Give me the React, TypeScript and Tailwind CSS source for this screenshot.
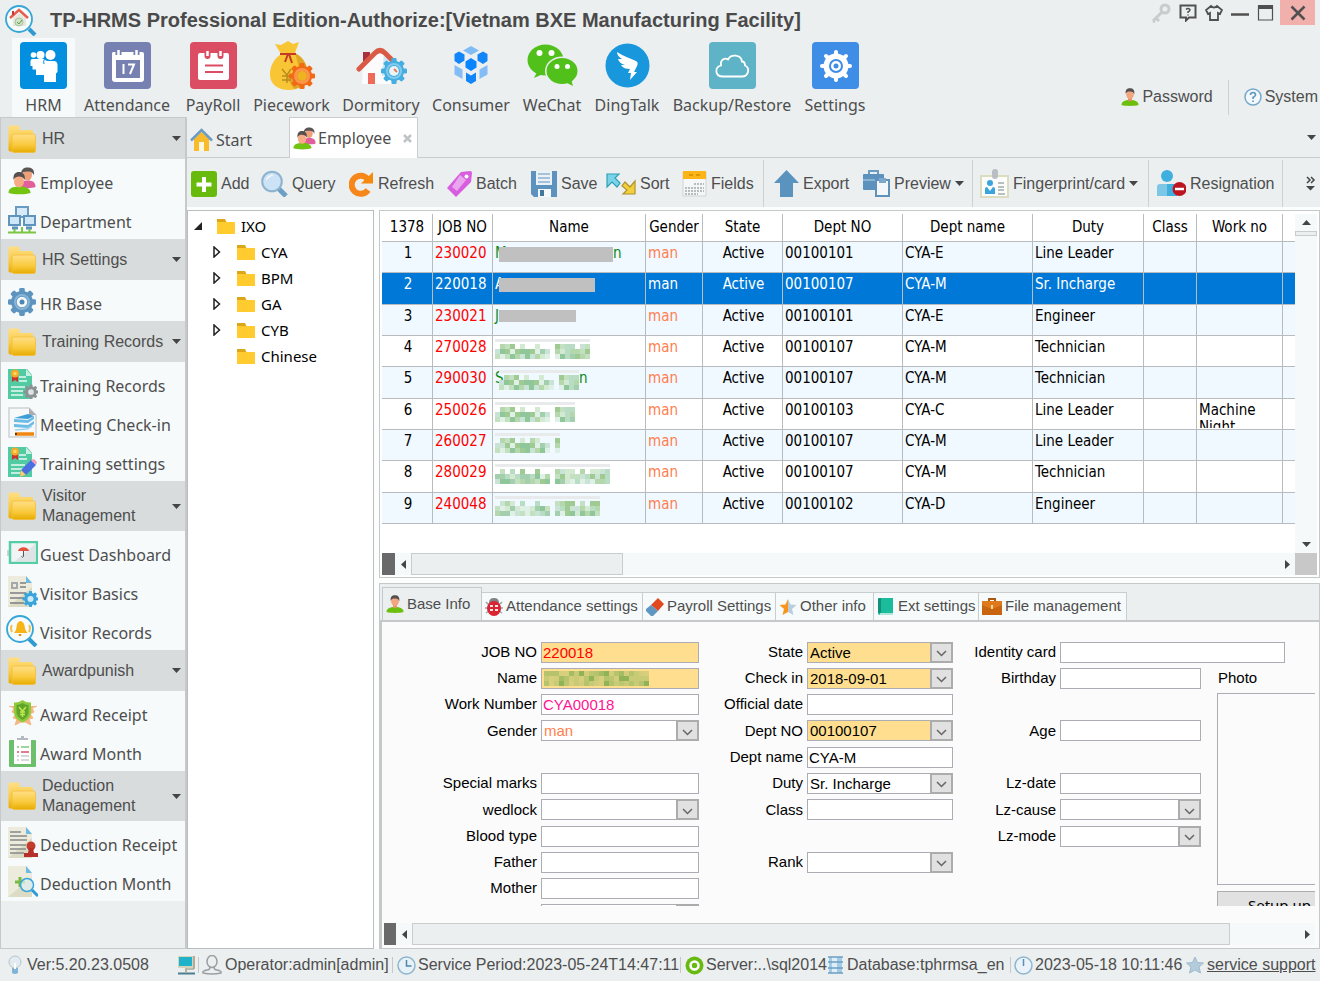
import React from 'react';

interface IconProps {
  w?: number;
  h?: number;
  box?: string;
  children: React.ReactNode;
}

const Svg: React.FC<IconProps> = ({ w = 28, h = 28, box = '0 0 28 28', children }) => (
  <svg width={w} height={h} viewBox={box} className="shrink-0" fill="none" aria-hidden="true">
    {children}
  </svg>
);

interface GearProps {
  cx: number;
  cy: number;
  r: number;
  fill: string;
  hole: string;
}

const Gear: React.FC<GearProps> = ({ cx, cy, r, fill, hole }) => (
  <g fill={fill}>
    {[0, 45, 90, 135, 180, 225, 270, 315].map((a) => (
      <rect key={a} x={cx - r * 0.2} y={cy - r} width={r * 0.4} height={r * 0.5} rx={r * 0.1} transform={`rotate(${a} ${cx} ${cy})`} />
    ))}
    <circle cx={cx} cy={cy} r={r * 0.78} />
    <circle cx={cx} cy={cy} r={r * 0.38} fill={hole} />
  </g>
);

/* ---------- people ---------- */

const PersonIcon = ({ size = 18 }: { size?: number }) => (
  <Svg w={size} h={size} box="0 0 18 18">
    <path d="M0.500 17c0-3.500 3-5 8.500-5s8.500 1.500 8.500 5c-4 1.200-13 1.200-17 0z" fill="#6cbf0c" />
    <path d="M7 9h4v3.500q-2 1.500-4 0z" fill="#e8906a" />
    <ellipse cx="9" cy="6.500" rx="3.800" ry="4.500" fill="#f3a67e" />
    <path d="M4.800 6C4 2 6 0.300 9 0.300S14 2 13.200 6.500C12.500 4 11 3.500 9 3.600 7 3.500 5.500 4 4.800 6z" fill="#55504e" />
  </Svg>
);

const PeopleIcon = ({ size = 28 }: { size?: number }) => (
  <Svg w={size} h={size}>
    <path d="M12 19c0-4 3-5.500 8-5.500s7.500 2 7.500 6.500c-4 1.500-11 1.500-15.500 0z" fill="#e0609c" />
    <ellipse cx="19.500" cy="8" rx="4.500" ry="5.500" fill="#ef9f7a" />
    <path d="M13 8C13 2 16 0.500 19.500 0.500S27 2 26 8.500C25 5 22 4.500 19 4.500S14 5 13 8z" fill="#5b5554" />
    <path d="M0.500 26c0-4.500 3.500-6.500 11-6.500S22.500 22 22.500 26c-5 1.800-17 1.800-22 0z" fill="#72c410" />
    <ellipse cx="11" cy="14.500" rx="5" ry="6" fill="#f6ab84" />
    <path d="M5.500 13C5 7 7.500 5 11 5s6.500 2 5.800 8C15.500 10.500 13.500 9.500 11 9.500S7 10 5.500 13z" fill="#57504f" />
  </Svg>
);

/* ---------- sidebar icons ---------- */

const FolderIcon = () => (
  <Svg w={28} h={28}>
    <defs>
      <linearGradient id="folder" x1="0" y1="0" x2="0" y2="1">
        <stop offset="0" stopColor="#ffdf86" />
        <stop offset="0.600" stopColor="#f9c93c" />
        <stop offset="1" stopColor="#e7ac00" />
      </linearGradient>
    </defs>
    <path d="M0.500 2q0-1.500 1.500-1.500h8q1.500 0 1.500 1.500v3h12q1.500 0 1.500 1.500v20h-23q-1.500 0-1.500-2z" fill="url(#folder)" />
    <rect x="4" y="9" width="23.500" height="18.500" rx="2" fill="url(#folder)" stroke="#f3bd3c" strokeWidth="0.800" />
  </Svg>
);

const NetworkIcon = () => (
  <Svg>
    <path d="M8 1h12v10H8z" fill="#d6eaf8" stroke="#6a9cc3" strokeWidth="2" />
    <path d="M1 10h11v9H1zM16 10h11v9H16z" fill="#cfe6f7" stroke="#5f94bd" strokeWidth="2" />
    <path d="M4 22h6M18 22h6" stroke="#5f94bd" strokeWidth="3" />
    <path d="M0 26.500h28M6.500 23v4M14 21v5M21.500 23v4" stroke="#7cc644" strokeWidth="2" />
  </Svg>
);

const GearIcon = () => (
  <Svg>
    <Gear cx={14} cy={14} r={14} fill="#5d94bf" hole="#f4f9fa" />
    <circle cx="14" cy="14" r="7" stroke="#8ab5d5" strokeWidth="2" />
    <circle cx="14" cy="14" r="2.500" fill="#4d86b3" />
  </Svg>
);

const CertificateIcon = ({ pencil = false }: { pencil?: boolean }) => (
  <Svg w={31} h={31} box="0 0 31 31">
    <path d="M1 1h19l5 6v24H1z" fill="#52cba3" />
    <path d="M19 1l6 7h-6z" fill="#c9f0e2" />
    <path d="M12 9h7M12 13h8M4 19h14M4 23h12M4 27h12" stroke="#e6faf3" strokeWidth="1.500" />
    <path d="M5 7h6v7l-3-2-3 2z" fill="#c8352f" />
    <circle cx="8" cy="5.500" r="4" fill="#f6ab28" />
    <circle cx="8" cy="5.500" r="1.800" fill="#ffd663" />
    {pencil ? (
      <g>
        <path d="M14 24L24 14l5 5-10 10-6 1z" fill="#4a6fe0" />
        <path d="M24 14l3-1 3 3-1 3z" fill="#f49ab5" />
        <path d="M14 24l5 5-6 1.500z" fill="#f6d35e" />
      </g>
    ) : (
      <Gear cx={24} cy={24} r={7.5} fill="#8c9394" hole="#dfe4e3" />
    )}
  </Svg>
);

const MeetingIcon = () => (
  <Svg w={29} h={31} box="0 0 29 31">
    <path d="M1 1h20l7 7v22H1z" fill="#f7f8f9" stroke="#cfd2d4" strokeWidth="1.500" />
    <path d="M21 1l7 7h-7z" fill="#a9adb0" />
    <path d="M6 11l14-4 6 2-6 3z" fill="#3e9fd6" />
    <path d="M6 12l14 1 6-4v3l-6 4-14-1zM6 17l14 1 6-4v3l-6 4-14-1z" fill="#6bbce6" />
    <path d="M7 23l12-1 5-3" stroke="#9dd2ee" strokeWidth="1.500" />
    <path d="M7 27h19" stroke="#f0870f" strokeWidth="3.500" />
    <path d="M7 27h2" stroke="#5b3a18" strokeWidth="2" />
  </Svg>
);

const DashboardIcon = () => (
  <Svg w={31} h={23} box="0 0 31 23">
    <path d="M0 9h3v6H0z" fill="#cfd3d4" />
    <rect x="3" y="1" width="27" height="21" fill="#f1f4f5" stroke="#56cda5" strokeWidth="2.500" />
    <path d="M28 3v17H8z" fill="#dfe3e6" />
    <path d="M11 10c1-5 10-5 11 0z" fill="#e4513f" />
    <path d="M16.500 10v5.500q-1 1.500-2 0" stroke="#555" strokeWidth="1" />
  </Svg>
);

const DocIcon = ({ kind }: { kind: 'gear' | 'stamp' | 'find' }) => (
  <Svg w={31} h={31} box="0 0 31 31">
    <path d="M1 0h18l6 7v24H1z" fill="#ecebdc" />
    <path d="M1 31l24-20v20z" fill="#dcdcc4" />
    <path d="M19 0l6 7h-6z" fill="#6dbbe3" />
    {kind === 'gear' && (
      <g>
        <path d="M5 7h5v5H5z" stroke="#a4a9ab" strokeWidth="2" />
        <path d="M13 7h6M13 11h6M3 17h16M3 22h14M3 27h14" stroke="#7b8082" strokeWidth="1.500" />
        <Gear cx={23.5} cy={23} r={8} fill="#3aa5dc" hole="#cfeaf6" />
      </g>
    )}
    {kind === 'stamp' && (
      <g>
        <path d="M3 5h11M3 9h17M3 13h17M3 18h16M3 22h16M3 26h14" stroke="#85898a" strokeWidth="1.500" />
        <circle cx="24" cy="19" r="4.500" fill="#c33d2f" />
        <path d="M22 21h4l1 5h4v4H17v-4h4z" fill="#b5302a" />
      </g>
    )}
    {kind === 'find' && (
      <g>
        <path d="M13 11v10M8 16h10" stroke="#7ab942" strokeWidth="3" />
        <circle cx="20" cy="19" r="6.500" fill="#dff1f5" fillOpacity="0.700" stroke="#3aa5dc" strokeWidth="1.500" />
        <path d="M25 24l6 6" stroke="#2f9bd3" strokeWidth="3" />
      </g>
    )}
  </Svg>
);

const BellSearchIcon = () => (
  <Svg w={32} h={32} box="0 0 32 32">
    <circle cx="14" cy="14" r="13" fill="#f7fbfc" stroke="#35a6d8" strokeWidth="1.800" />
    <path d="M14.500 6c4.500 1 4 6 5 9l2 3H8l2-3c1-3 0-8 4.500-9z" fill="#f7b417" />
    <path d="M14 19v2" stroke="#d99400" strokeWidth="2.500" />
    <path d="M6 10q-2 3 0 7M23 10q2 3 0 7" stroke="#f4c24b" strokeWidth="2" />
    <path d="M23 24l7 7" stroke="#2f9bd3" strokeWidth="4" />
  </Svg>
);

const ShieldIcon = () => (
  <Svg w={29} h={26} box="0 0 29 26">
    <path d="M1 6l5 2-2 4 4 2-3 4 4 1-2 6 6-3h4l6 3-2-6 4-1-3-4 4-2-2-4 5-2" fill="#f6b681" stroke="#f6b681" />
    <path d="M14.500 0q4 3 8.500 2.500v9c0 6-4 9-8.500 11C10 20.500 6 17.500 6 11.500v-9Q10.500 3 14.500 0z" fill="#8fca3c" />
    <path d="M14.500 3q3 2 6 2v7c0 4-3 6-6 8-3-2-6-4-6-8V5q3 0 6-2z" fill="#5fa52c" />
    <path d="M11 7l3.500 4L18 7M14.500 11v6M12 12h5M12 14.500h5" stroke="#c3e64e" strokeWidth="1.500" />
  </Svg>
);

const ClipboardIcon = () => (
  <Svg w={29} h={31} box="0 0 29 31">
    <rect x="1" y="4" width="27" height="27" rx="1" fill="#6cc06c" />
    <path d="M6 4h17v24H6z" fill="#fff" />
    <path d="M9 4h11V2h-4V0h-3v2H9z" fill="#b3b9c0" />
    <path d="M9 11h2M13 11h8" stroke="#7dc77d" strokeWidth="1.500" />
    <path d="M9 16h2M13 16h8" stroke="#d8516b" strokeWidth="1.500" />
    <path d="M9 20h2M13 20h8M9 24h2M13 24h8" stroke="#c9ccce" strokeWidth="1.500" />
  </Svg>
);

/* ---------- ribbon icons ---------- */

const HrmIcon = () => (
  <Svg w={47} h={47} box="0 0 47 47">
    <rect width="47" height="47" rx="4" fill="#038fe0" />
    <g fill="#fff">
      <circle cx="30.500" cy="13" r="5" />
      <circle cx="20.500" cy="13" r="4" />
      <circle cx="13.500" cy="13" r="2.800" />
      <path d="M10.500 19q0-2 2-2h12q1 2 3 2h6q4 0 4 4v7l-1.500 1.500V40h-12v-7h-8v-5.500h-3.500V24h-2z" />
    </g>
    <path d="M24.500 17q-1.500 2-.5 5" stroke="#038fe0" />
  </Svg>
);

const CalendarIcon = () => (
  <Svg w={47} h={47} box="0 0 47 47">
    <rect width="47" height="47" rx="4" fill="#7680b1" />
    <path d="M9 10h29q2 0 2 2v25q0 3-3 3H11q-3 0-3-3V12q0-2 1-2z" fill="#fff" />
    <path d="M12 18h24v18H12z" fill="#7680b1" />
    <path d="M14.500 8v5M32.500 8v5" stroke="#7680b1" strokeWidth="6" />
    <path d="M14.500 8v5M32.500 8v5" stroke="#fff" strokeWidth="2.500" />
    <path d="M19.500 22v10M24 22.500h6l-4 9.500" stroke="#fff" strokeWidth="2" />
  </Svg>
);

const PayrollIcon = () => (
  <Svg w={47} h={47} box="0 0 47 47">
    <rect width="47" height="47" rx="4" fill="#da4d63" />
    <rect x="8" y="11" width="31" height="27" rx="2" fill="#fff" />
    <path d="M17.500 9v5M30.500 9v5" stroke="#da4d63" strokeWidth="6" strokeLinecap="round" />
    <path d="M17.500 9v5M30.500 9v5" stroke="#fff" strokeWidth="2.500" />
    <path d="M15 23.500h18M15 30h18" stroke="#da4d63" strokeWidth="2" />
  </Svg>
);

const MoneyBagIcon = () => (
  <Svg w={47} h={50} box="0 0 47 50">
    <path d="M7 4l6 1 7-4 5 3 6-2-4 11c8 4 14 13 12 22-2 11-9 15-18 15S2 46 2 34c0-9 5-16 11-20z" fill="#f8c535" />
    <path d="M27 13c8 4 14 13 12 22-2 9-7 13-13 14L18 36l14-5z" fill="#e0a628" />
    <path d="M12 14h16M20 14l-3 8M21 14l3 9" stroke="#c43a26" strokeWidth="2" />
    <path d="M14 29l5 6 4-6M19 35v8M14 36h9M14 40h9" stroke="#b98d1c" strokeWidth="1.500" />
    <Gear cx={34} cy={36} r={13} fill="#f26a14" hole="#eeb321" />
    <circle cx="34" cy="36" r="6.500" stroke="#f9964a" strokeWidth="3" />
  </Svg>
);

const DormIcon = () => (
  <Svg w={51} h={47} box="0 0 51 47">
    <path d="M7 10h7v9H7z" fill="#a93238" />
    <path d="M7 24l17-14 15 14v18H6z" fill="#fbfbfb" />
    <path d="M28 10l11 14v10H26z" fill="#cfe8f5" />
    <path d="M12 31h7v11h-7z" fill="#ef6a5a" />
    <path d="M3 27L19 11q5-5 10 0l9 9" stroke="#d95b45" strokeWidth="5" strokeLinecap="round" />
    <Gear cx={38} cy={29} r={13} fill="#45aee0" hole="#eaf3f6" />
    <circle cx="38" cy="29" r="7" stroke="#82cbec" strokeWidth="2" />
    <path d="M38 27l3 3" stroke="#e87965" strokeWidth="2" />
  </Svg>
);

const ConsumerIcon = () => (
  <Svg w={34} h={38} box="0 0 34 38">
    <path d="M17 0l8 4.500L17 9 9 4.500z" fill="#7fbcf6" />
    <path d="M0.500 8L5 5.500l5.500 3v6L5 18l-4.500-3zM33.500 8L29 5.500l-5.500 3v6L29 18l4.500-3z" fill="#1285f8" />
    <path d="M17 12l5.500 3.500v6L17 25l-5.500-3.500v-6z" fill="#0a84ff" />
    <path d="M0.500 19l8 4.500V33l-8-4.500zM33.500 19l-8 4.500V33l8-4.500z" fill="#84bdf5" />
    <path d="M12 26.500l5 3 5-3V35l-5 3-5-3z" fill="#1285f8" />
  </Svg>
);

const WeChatIcon = () => (
  <Svg w={51} h={42} box="0 0 51 42">
    <ellipse cx="18.500" cy="16" rx="18" ry="15.500" fill="#51c01a" />
    <path d="M10 28l-3 6 9-4z" fill="#51c01a" />
    <ellipse cx="35" cy="27" rx="17" ry="14.500" fill="#ebeff0" />
    <ellipse cx="35" cy="27" rx="15.500" ry="13" fill="#51c01a" />
    <path d="M38 38l8 4-2-7z" fill="#51c01a" />
    <g fill="#fff">
      <circle cx="12.500" cy="9" r="3" />
      <circle cx="24.500" cy="9" r="3" />
      <circle cx="30" cy="22.500" r="2.500" />
      <circle cx="40.500" cy="22.500" r="2.500" />
    </g>
  </Svg>
);

const DingTalkIcon = () => (
  <Svg w={45} h={45} box="0 0 45 45">
    <circle cx="22.500" cy="22.500" r="22" fill="#1897dd" />
    <path d="M12 9c6 4 13 6 19 9 2 1 2 3 1 5l-3 6h3l-7 8 1-7h-3l2-4c-4 0-7-1-9-4l4 0c-4-1-6-3-7-6l4 0c-3-2-5-4-5-7z" fill="#fff" />
  </Svg>
);

const CloudIcon = () => (
  <Svg w={47} h={47} box="0 0 47 47">
    <rect width="47" height="47" rx="4" fill="#5eb3c7" />
    <path d="M14 34.500c-8 0-9-9-2-11-1-6 4-8 7-6 3-6 13-5 14 2 3 0 3 2 3 4 5 2 4 11-3 11z" stroke="#fff" strokeWidth="1.800" />
  </Svg>
);

const SettingsIcon = () => (
  <Svg w={47} h={47} box="0 0 47 47">
    <rect width="47" height="47" rx="4" fill="#3e8de6" />
    <g stroke="#fff" strokeWidth="4" strokeLinecap="round">
      <path d="M24 10v28M10 24h28M14 14l20 20M34 14l-20 20" />
    </g>
    <circle cx="24" cy="24" r="12.500" fill="#fff" />
    <circle cx="24" cy="24" r="6" stroke="#3e8de6" strokeWidth="2" />
    <circle cx="24" cy="24" r="2.500" fill="#3e8de6" />
  </Svg>
);

/* ---------- toolbar icons ---------- */

const AddIcon = () => (
  <Svg w={26} h={26} box="0 0 26 26">
    <rect width="26" height="26" rx="3" fill="#68bb0d" />
    <path d="M13 6v15M5.500 13.500h15" stroke="#fff" strokeWidth="4" />
  </Svg>
);

const QueryIcon = () => (
  <Svg w={27} h={27} box="0 0 27 27">
    <path d="M17 18l8 8" stroke="#6e9fc6" strokeWidth="5" />
    <circle cx="11" cy="11.500" r="9.800" fill="#cbe3f4" stroke="#8eb3cf" strokeWidth="2" />
    <path d="M5 11c0-4 4-7 8-6-3 1-6 3-8 6z" fill="#f4fafd" />
  </Svg>
);

const RefreshIcon = () => (
  <Svg w={25} h={26} box="0 0 25 26">
    <path d="M18.500 8A9 9 0 1 0 19 19" stroke="#f7861b" strokeWidth="6" />
    <path d="M12 12.500h12V1z" fill="#f58a0c" />
  </Svg>
);

const TagIcon = () => (
  <Svg w={26} h={26} box="0 0 26 26">
    <path d="M15 1l9-1q2 0 2 2l-1 9-15 15L1 17z" fill="#d85ddf" />
    <path d="M14 4l6 5-9 11-5-4z" fill="#eaa5ef" />
    <circle cx="20.500" cy="5.500" r="2" fill="#fff" />
  </Svg>
);

const SaveIcon = () => (
  <Svg w={26} h={27} box="0 0 26 27">
    <path d="M0 1h26v26H3l-3-3z" fill="#5c92bd" />
    <path d="M5 1h16v14H5z" fill="#eaf2f8" />
    <path d="M7 4h12M7 8h12M7 12h12" stroke="#8fb3d0" strokeWidth="1.500" />
    <path d="M7 19h13v8H7z" fill="#f4f8fb" />
    <path d="M9 20h4v6H9z" fill="#3f779f" />
  </Svg>
);

const SortIcon = () => (
  <Svg w={30} h={22} box="0 0 30 22">
    <path d="M1 1h12l-4 4 5 5-3 4-5-5-5 5z" fill="#7ad3e6" stroke="#2f9fb8" strokeWidth="1.200" />
    <path d="M29 21H17l4-4-5-4 3-4 5 5 5-6z" fill="#f2cf3b" stroke="#b1922a" strokeWidth="1.200" />
  </Svg>
);

const FieldsIcon = () => (
  <Svg w={25} h={26} box="0 0 25 26">
    <path d="M1 1h23v24H1z" fill="#f5f6f7" stroke="#cfd3d5" />
    <path d="M1 0h23v8H1z" fill="#fdb515" />
    <path d="M7 4h4M14 4h4" stroke="#d08f00" strokeWidth="1.500" />
    <path d="M12 13h10M3 17h19M3 20h19M3 23h13" stroke="#b7bcbf" strokeWidth="2" strokeDasharray="2 1" />
  </Svg>
);

const ExportIcon = () => (
  <Svg w={25} h={28} box="0 0 25 28">
    <path d="M12.500 0L25 13h-6v14H6V13H0z" fill="#5b93bf" />
  </Svg>
);

const PreviewIcon = () => (
  <Svg w={27} h={27} box="0 0 27 27">
    <path d="M6 4V1h9v3" stroke="#6d9cc2" strokeWidth="2" />
    <rect y="4" width="21" height="16" rx="1" fill="#5c92bd" />
    <path d="M0 10h21" stroke="#9cc0dc" strokeWidth="1.500" />
    <path d="M13 10h13v16H13z" fill="#f4f7fa" stroke="#6092b9" strokeWidth="2" />
    <path d="M16 8h7v5h-7z" fill="#7ba8cb" />
  </Svg>
);

const CardIcon = () => (
  <Svg w={29} h={29} box="0 0 29 29">
    <path d="M1 7h27v21H1z" fill="#fbfcfc" stroke="#dcdcc0" strokeWidth="2" />
    <rect x="12" y="0" width="6" height="10" rx="3" fill="#b9bec2" />
    <circle cx="10" cy="14" r="3" fill="#3aa5dc" />
    <path d="M5 25v-5q0-2 2-2l3 4 3-4q2 0 2 2v5z" fill="#3aa5dc" />
    <path d="M18 14h6M18 18h6M18 21h6M18 25h7" stroke="#a4a9ab" strokeWidth="1.500" />
  </Svg>
);

const ResignIcon = () => (
  <Svg w={29} h={27} box="0 0 29 27">
    <circle cx="10" cy="6" r="6" fill="#3fafdd" />
    <path d="M0 26V17q0-3 3-3h14q3 0 3 3v9z" fill="#7cc6e6" />
    <path d="M10 14h7q3 0 3 3v9H10z" fill="#3fafdd" />
    <circle cx="22.500" cy="19" r="7" fill="#be1420" />
    <path d="M18 19h9" stroke="#fff" strokeWidth="2.500" />
  </Svg>
);

const HomeIcon = () => (
  <Svg w={23} h={24} box="0 0 23 24">
    <path d="M4 11l7.500-7L19 11v12H4z" fill="#f8bb2b" />
    <path d="M9 14h5v9H9z" fill="#fff7dd" />
    <path d="M1 12.500L11.500 2 22 12.500" stroke="#6d9cc2" strokeWidth="2.500" />
  </Svg>
);

const Arrow = ({ dir }: { dir: 'down' | 'up' | 'left' | 'right' }) => {
  const d = {
    down: 'M0 2h9L4.500 7z',
    up: 'M0 7h9L4.500 2z',
    left: 'M7 0v9L2 4.500z',
    right: 'M2 0v9l5-4.500z',
  }[dir];
  return (
    <Svg w={9} h={9} box="0 0 9 9">
      <path d={d} fill="#454545" />
    </Svg>
  );
};

/* ---------- data ---------- */

const modules = [
  { label: 'HRM', width: 'w-[63px] bg-[#f6fafb]', icon: <HrmIcon /> },
  { label: 'Attendance', width: 'w-[104px]', icon: <CalendarIcon /> },
  { label: 'PayRoll', width: 'w-[68px]', icon: <PayrollIcon /> },
  { label: 'Piecework', width: 'w-[89px]', icon: <MoneyBagIcon /> },
  { label: 'Dormitory', width: 'w-[90px]', icon: <DormIcon /> },
  { label: 'Consumer', width: 'w-[90px]', icon: <ConsumerIcon /> },
  { label: 'WeChat', width: 'w-[72px]', icon: <WeChatIcon /> },
  { label: 'DingTalk', width: 'w-[78px]', icon: <DingTalkIcon /> },
  { label: 'Backup/Restore', width: 'w-[132px]', icon: <CloudIcon /> },
  { label: 'Settings', width: 'w-[74px]', icon: <SettingsIcon /> },
];

const navGroups = [
  {
    title: 'HR',
    tall: false,
    items: [
      { label: 'Employee', icon: <PeopleIcon /> },
      { label: 'Department', icon: <NetworkIcon /> },
    ],
  },
  { title: 'HR Settings', tall: false, items: [{ label: 'HR Base', icon: <GearIcon /> }] },
  {
    title: 'Training Records',
    tall: false,
    items: [
      { label: 'Training Records', icon: <CertificateIcon /> },
      { label: 'Meeting Check-in', icon: <MeetingIcon /> },
      { label: 'Training settings', icon: <CertificateIcon pencil /> },
    ],
  },
  {
    title: 'Visitor Management',
    tall: true,
    items: [
      { label: 'Guest Dashboard', icon: <DashboardIcon /> },
      { label: 'Visitor Basics', icon: <DocIcon kind="gear" /> },
      { label: 'Visitor Records', icon: <BellSearchIcon /> },
    ],
  },
  {
    title: 'Awardpunish',
    tall: false,
    items: [
      { label: 'Award Receipt', icon: <ShieldIcon /> },
      { label: 'Award Month', icon: <ClipboardIcon /> },
    ],
  },
  {
    title: 'Deduction Management',
    tall: true,
    items: [
      { label: 'Deduction Receipt', icon: <DocIcon kind="stamp" /> },
      { label: 'Deduction Month', icon: <DocIcon kind="find" /> },
    ],
  },
];

interface Employee {
  jobNo: string;
  first?: string;
  last?: string;
  bar?: string;
  mosaic?: number;
  deptNo: string;
  dept: string;
  duty: string;
  workNo?: string;
}

const employees: Employee[] = [
  { jobNo: '230020', first: 'M', last: 'n', bar: 'w-[114px] h-[15px]', deptNo: '00100101', dept: 'CYA-E', duty: 'Line Leader' },
  { jobNo: '220018', first: 'A', bar: 'w-[96px] h-[14px]', deptNo: '00100107', dept: 'CYA-M', duty: 'Sr. Incharge' },
  { jobNo: '230021', first: 'J', bar: 'w-[77px] h-[12px]', deptNo: '00100101', dept: 'CYA-E', duty: 'Engineer' },
  { jobNo: '270028', mosaic: 19, deptNo: '00100107', dept: 'CYA-M', duty: 'Technician' },
  { jobNo: '290030', first: 'S', last: 'n', mosaic: 16, deptNo: '00100107', dept: 'CYA-M', duty: 'Technician' },
  { jobNo: '250026', mosaic: 16, deptNo: '00100103', dept: 'CYA-C', duty: 'Line Leader', workNo: 'Machine Night' },
  { jobNo: '260027', mosaic: 13, deptNo: '00100107', dept: 'CYA-M', duty: 'Line Leader' },
  { jobNo: '280029', mosaic: 23, deptNo: '00100107', dept: 'CYA-M', duty: 'Technician' },
  { jobNo: '240048', mosaic: 21, deptNo: '00100102', dept: 'CYA-D', duty: 'Engineer' },
];

const greens = ['#8fc79a', '#b4d8ab', '#d3e9d2', '#a3cfae', '#c3e0c0', '#9fca92', '#dff0e6', '#c9e4d6', '#b9dcc4'];
const olives = ['#b5c46c', '#d8cf7c', '#a4bd62', '#c9ca76', '#8fb356', '#d3cd7b', '#bcc66e'];

interface MosaicProps {
  cols: number;
  colors?: string[];
  band?: boolean;
}

// pixelated cover over a private name
const Mosaic: React.FC<MosaicProps> = ({ cols, colors = greens, band = true }) => {
  const top = band ? 5 : 0;
  return (
    <svg width={cols * 5} height={15 + top} className="relative shrink-0" aria-hidden="true">
      {band && <rect width={cols * 5} height="3" fill="#e8eaeb" />}
      {Array.from({ length: cols * 3 }, (_, i) => {
        const c = i % cols;
        const r = Math.floor(i / cols);
        const n = (c * c * 7 + r * 31 + c * r * 11 + cols * 3) % 97;
        if (band && (c === 11 || (r === 0 && n % 3 === 0))) return null;
        return <rect key={i} x={c * 5} y={r * 5 + top} width="5" height="5" fill={colors[n % colors.length]} />;
      })}
    </svg>
  );
};

/* ---------- sections ---------- */

const TitleBar = () => (
  <div className="flex h-[38px] items-start px-[5px]">
    <div className="flex flex-1 items-center pt-[4px]">
      <Svg w={32} h={32} box="0 0 32 32">
        <circle cx="14" cy="15" r="13" fill="#f7fbfc" stroke="#35a6d8" strokeWidth="1.800" />
        <path d="M8 14l6-5 7 5v8H8z" fill="#e9e6de" />
        <path d="M5 14l9-8 9 8" stroke="#e4604e" strokeWidth="2.500" />
        <path d="M8 7v4" stroke="#c23b34" strokeWidth="2" />
        <circle cx="14" cy="18" r="4" fill="#cfe3c8" stroke="#a8c59c" />
        <path d="M12 18l2 2 3-4" stroke="#5aa048" />
        <path d="M24 25l6 6" stroke="#2f9bd3" strokeWidth="4" />
      </Svg>
      <h1 className="ml-[13px] whitespace-nowrap text-[20px] leading-[32px] font-bold text-[#4a4a4a]">
        TP-HRMS Professional Edition-Authorize:[Vietnam BXE Manufacturing Facility]
      </h1>
    </div>
    <div className="flex h-[25px] items-center gap-[8px]">
      <button aria-label="Key">
        <Svg w={20} h={20} box="0 0 20 20">
          <circle cx="14" cy="6" r="4" stroke="#c9cccd" strokeWidth="3" />
          <path d="M11 9l-9 9M5 15l3 3M2 18l2 1" stroke="#c9cccd" strokeWidth="3" />
        </Svg>
      </button>
      <button aria-label="Help">
        <Svg w={18} h={18} box="0 0 18 18">
          <path d="M1.500 1.500h15v12H10l-3 3v-3H1.500z" stroke="#505050" strokeWidth="2" />
          <path d="M7 5.500q2-2 4 0 0 1.500-2 2.500v1M9 10.500v1" stroke="#505050" strokeWidth="1.500" />
        </Svg>
      </button>
      <button aria-label="Skin">
        <Svg w={18} h={18} box="0 0 18 18">
          <path d="M6 2L1 6l2 4 2-1v7h8V9l2 1 2-4-5-4q-3 3-6 0z" stroke="#505050" strokeWidth="1.800" />
        </Svg>
      </button>
      <button aria-label="Minimize">
        <Svg w={18} h={18} box="0 0 18 18">
          <path d="M0 10.500h18" stroke="#505050" strokeWidth="2.500" />
        </Svg>
      </button>
      <div className="flex items-center gap-[6px]">
        <button aria-label="Maximize">
          <Svg w={17} h={18} box="0 0 17 18">
            <path d="M1.500 2h14v14h-14z" stroke="#505050" strokeWidth="1.200" />
            <path d="M1 3h15" stroke="#505050" strokeWidth="4" />
          </Svg>
        </button>
        <button aria-label="Close" className="flex h-[25px] w-[35px] items-center justify-center bg-[#f1b0ac]">
          <Svg w={16} h={16} box="0 0 16 16">
            <path d="M1.500 1.500l13 13M14.500 1.500l-13 13" stroke="#505050" strokeWidth="2.500" />
          </Svg>
        </button>
      </div>
    </div>
  </div>
);

const Ribbon = () => (
  <div className="flex h-[79px] pl-3">
    <nav className="flex flex-1 font-['Noto_Sans',sans-serif]">
      {modules.map((m) => (
        <button key={m.label} className={`flex flex-col items-center pt-[2px] ${m.width}`}>
          <span className="flex h-[50px] items-center">{m.icon}</span>
          <span className="pt-[4px] text-[16px] leading-[22px] whitespace-nowrap">{m.label}</span>
        </button>
      ))}
    </nav>
    <div className="mt-[41px] flex h-[36px] items-center pr-[2px]">
      <button className="flex items-center gap-[3px] pr-[15px]">
        <PersonIcon />
        Password
      </button>
      <span className="h-[35px] w-px bg-[#cdd1d2]" />
      <button className="flex items-center gap-[3px] pl-[15px]">
        <Svg w={18} h={18} box="0 0 18 18">
          <circle cx="9" cy="9" r="8" fill="#f2f8fb" stroke="#74a9cb" strokeWidth="1.500" />
          <path d="M6.500 7q0-2.500 2.500-2.500T11.500 7Q11.500 8 9 9.500V11M9 12.500V14" stroke="#5c99c0" strokeWidth="1.600" />
        </Svg>
        System
      </button>
    </div>
  </div>
);

const Sidebar = () => (
  <aside className="w-[187px] shrink-0 border border-r-2 border-[#c5c9ca] bg-[#ebeff0]">
    {navGroups.map((g) => (
      <section key={g.title}>
        <button className={`flex w-full items-center bg-[#d8dcdc] pr-[4px] pl-[7px] text-left ${g.tall ? 'h-[50px]' : 'h-[41px]'}`}>
          <FolderIcon />
          <span className="ml-[6px] flex-1 leading-[20px]">{g.title}</span>
          <Arrow dir="down" />
        </button>
        <ul className="bg-[#f6fafb] pt-[2px] font-['Noto_Sans',sans-serif]">
          {g.items.map((item) => (
            <li key={item.label}>
              <button className="flex h-[39px] w-full items-center text-left whitespace-nowrap">
                <span className="flex w-[39px] shrink-0 items-center justify-center pl-[3px]">{item.icon}</span>
                <span className="pt-1">{item.label}</span>
              </button>
            </li>
          ))}
        </ul>
      </section>
    ))}
  </aside>
);

const TabStrip = () => (
  <div className="flex h-[41px] items-stretch border-b border-[#c9cdce] font-['Noto_Sans',sans-serif]">
    <button className="flex w-[102px] items-center gap-[3px] pt-[5px] pl-[3px]">
      <HomeIcon />
      Start
    </button>
    <button className="-mb-px flex w-[129px] items-center gap-[2px] border border-b-0 border-[#c9cdce] bg-white pl-[3px]">
      <PeopleIcon size={23} />
      Employee
      <span className="ml-auto pr-[5px]">
        <Svg w={9} h={9} box="0 0 9 9">
          <path d="M1 1l7 7M8 1L1 8" stroke="#c0c3c4" strokeWidth="2.500" />
        </Svg>
      </span>
    </button>
    <button aria-label="More tabs" className="ml-auto pr-[4px]">
      <Arrow dir="down" />
    </button>
  </div>
);

const ToolButton = ({ label, icon, width, menu = false }: { label: string; icon: React.ReactNode; width: string; menu?: boolean }) => (
  <button className={`flex h-full shrink-0 items-center gap-[4px] whitespace-nowrap ${width}`}>
    {icon}
    <span>{label}</span>
    {menu && <Arrow dir="down" />}
  </button>
);

const Separator = () => <span className="h-full w-px shrink-0 bg-[#cdd1d2]" />;

const Toolbar = () => (
  <div className="flex h-[49px] items-center pt-[2px] pl-[4px]">
    <ToolButton label="Add" icon={<AddIcon />} width="w-[70px]" />
    <ToolButton label="Query" icon={<QueryIcon />} width="w-[88px]" />
    <ToolButton label="Refresh" icon={<RefreshIcon />} width="w-[97px]" />
    <ToolButton label="Batch" icon={<TagIcon />} width="w-[85px]" />
    <ToolButton label="Save" icon={<SaveIcon />} width="w-[75px]" />
    <ToolButton label="Sort" icon={<SortIcon />} width="w-[76px]" />
    <ToolButton label="Fields" icon={<FieldsIcon />} width="w-[81px]" />
    <Separator />
    <ToolButton label="Export" icon={<ExportIcon />} width="ml-[10px] w-[89px]" />
    <ToolButton label="Preview" icon={<PreviewIcon />} width="w-[109px]" menu />
    <Separator />
    <ToolButton label="Fingerprint/card" icon={<CardIcon />} width="ml-[7px] w-[168px]" menu />
    <Separator />
    <ToolButton label="Resignation" icon={<ResignIcon />} width="ml-[8px] w-[125px]" />
    <Separator />
    <button aria-label="More tools" className="ml-auto pr-[4px]">
      <Svg w={10} h={15} box="0 0 10 15">
        <path d="M1 1l3 3-3 3M5 1l3 3-3 3" stroke="#454545" strokeWidth="1.500" />
        <path d="M0 10h9l-4.500 4.500z" fill="#454545" />
      </Svg>
    </button>
  </div>
);

const TreeFolder = () => (
  <Svg w={18} h={15} box="0 0 18 15">
    <path d="M0 0h8l1.500 3H18v4H0z" fill="#dba716" />
    <path d="M0 3h18v12H0z" fill="#ffcb2f" />
  </Svg>
);

const Tree = () => (
  <div className="w-[187px] shrink-0 border border-[#b9bdbe] bg-white pt-[2px] font-['Noto_Sans',sans-serif] text-[15px] leading-[26px] text-black">
    <div className="flex items-center pl-[6px]">
      <Svg w={8} h={8} box="0 0 8 8">
        <path d="M8 0v8H0z" fill="#222" />
      </Svg>
      <span className="mr-[6px] ml-[15px]"><TreeFolder /></span>
      IXO
    </div>
    {['CYA', 'BPM', 'GA', 'CYB', 'Chinese'].map((name) => (
      <div key={name} className="flex items-center pl-[25px]">
        <span className="w-[24px]">
          {name !== 'Chinese' && (
            <Svg w={8} h={12} box="0 0 8 12">
              <path d="M1 1v10l5.500-5z" stroke="#222" strokeWidth="1.500" />
            </Svg>
          )}
        </span>
        <TreeFolder />
        <span className="ml-[6px]">{name}</span>
      </div>
    ))}
  </div>
);

const columns = [
  { label: '1378', width: 'w-[51px]' },
  { label: 'JOB NO', width: 'w-[60px]' },
  { label: 'Name', width: 'w-[153px]' },
  { label: 'Gender', width: 'w-[57px]' },
  { label: 'State', width: 'w-[80px]' },
  { label: 'Dept NO', width: 'w-[120px]' },
  { label: 'Dept name', width: 'w-[130px]' },
  { label: 'Duty', width: 'w-[111px]' },
  { label: 'Class', width: 'w-[53px]' },
  { label: 'Work no', width: 'w-[86px]' },
  { label: '', width: '' },
];

const Cell = ({ children, className = '' }: { children?: React.ReactNode; className?: string }) => (
  <td className="border-r border-b border-[#b9bcbe] p-0 align-top last:border-r-0">
    <div className={`h-[29px] overflow-hidden pt-[3px] pl-[2px] leading-[17px] ${className}`}>{children}</div>
  </td>
);

const EmployeeTable = () => (
  <table className="h-[310px] w-full table-fixed border-separate border-spacing-0 text-[15px] text-black">
    <thead>
      <tr className="h-[28px]">
        {columns.map((c) => (
          <th key={c.label} className={`border-r border-b border-[#b9bcbe] p-0 font-normal whitespace-nowrap last:border-r-0 ${c.width}`}>
            {c.label}
          </th>
        ))}
      </tr>
    </thead>
    <tbody>
      {employees.map((e, i) => {
        const selected = i === 1;
        return (
          <tr key={e.jobNo} className={selected ? 'bg-[#0078d7] text-white' : i % 2 === 0 ? 'bg-[#f0f9ff]' : 'bg-white'}>
            <Cell className="text-center">{i + 1}</Cell>
            <Cell className={selected ? '' : 'text-[#ff0000]'}>{e.jobNo}</Cell>
            <Cell className={selected ? '' : 'text-[#0a8a1e]'}>
              <span className="flex items-start">
                {e.first && <span className="w-[4px]">{e.first}</span>}
                {e.bar && <span className={`relative mt-[2px] bg-[#c0c0c0] ${e.bar}`} />}
                {e.mosaic && <Mosaic cols={e.mosaic} />}
                {e.last}
              </span>
            </Cell>
            <Cell className={selected ? '' : 'text-[#ff7f50]'}>man</Cell>
            <Cell className="text-center">Active</Cell>
            <Cell>{e.deptNo}</Cell>
            <Cell>{e.dept}</Cell>
            <Cell>{e.duty}</Cell>
            <Cell />
            <Cell>{e.workNo}</Cell>
            <Cell />
          </tr>
        );
      })}
    </tbody>
  </table>
);

const TablePanel = () => (
  <div className="flex h-[368px] flex-col border border-[#c5c9ca] bg-white p-[2px] pt-[3px]">
    <div className="flex min-h-0 flex-1 font-['DejaVu_Sans_Condensed','Noto_Sans',sans-serif]">
      <div className="min-w-0 flex-1">
        <EmployeeTable />
      </div>
      <div className="flex w-[22px] flex-col items-center bg-[#f5f9fa] pt-[4px] pb-[4px]">
        <Arrow dir="up" />
        <span className="mt-[4px] h-[5px] w-full border border-[#c9cdce] bg-[#ebeff0]" />
        <span className="mt-auto"><Arrow dir="down" /></span>
      </div>
    </div>
    <div className="flex h-[22px] items-center bg-[#f5f9fa]">
      <span className="mr-[4px] h-full w-[13px] bg-[#696969]" />
      <Arrow dir="left" />
      <span className="ml-[3px] h-full w-[212px] border border-[#c9cdce] bg-[#ebeff0]" />
      <span className="mr-[3px] ml-auto"><Arrow dir="right" /></span>
      <span className="h-full w-[22px] bg-[#c8c8c8]" />
    </div>
  </div>
);

const detailTabs = [
  {
    label: 'Attendance settings',
    width: 'w-[161px]',
    icon: (
      <Svg w={18} h={18} box="0 0 18 18">
        <path d="M1 4l3 3M17 4l-3 3M0 10h3M15 10h3M1 15l3-2M17 15l-3-2" stroke="#96a4ae" strokeWidth="1.500" />
        <path d="M4 5q0-5 5-5t5 5z" fill="#7c8489" />
        <ellipse cx="9" cy="10.500" rx="7" ry="7.500" fill="#d92532" />
        <path d="M5 8h3M10 8h3M5 12h3M10 12h3" stroke="#fbe3e4" strokeWidth="2" />
      </Svg>
    ),
  },
  {
    label: 'Payroll Settings',
    width: 'w-[133px]',
    icon: (
      <Svg w={18} h={18} box="0 0 18 18">
        <path d="M12 0l6 6-6 7-7-6z" fill="#e2491f" />
        <path d="M5 7l7 6-5 5H5l-5-5v-2z" fill="#5f96c2" />
      </Svg>
    ),
  },
  {
    label: 'Other info',
    width: 'w-[98px]',
    icon: (
      <Svg w={18} h={18} box="0 0 18 18">
        <path d="M9 1l2.500 5.500 6 .5-4.500 4 1.500 6L9 14z" fill="#b9cddb" />
        <path d="M9 1L6.500 6.500l-6 .5L5 11l-1.500 6L9 14z" fill="#f8951d" />
      </Svg>
    ),
  },
  {
    label: 'Ext settings',
    width: 'w-[105px]',
    icon: (
      <Svg w={18} h={18} box="0 0 18 18">
        <path d="M1 1q0-1 2-1h13v17H3q-2 0-2-2z" fill="#1abc9c" />
        <path d="M1 1q0-1 2-1h1v15H1z" fill="#12927a" />
        <path d="M3 16h13" stroke="#dff4ef" strokeWidth="1.500" />
      </Svg>
    ),
  },
  {
    label: 'File management',
    width: 'w-[148px]',
    icon: (
      <Svg w={20} h={18} box="0 0 20 18">
        <path d="M7 4V1h6v3" stroke="#a85a10" strokeWidth="2" />
        <path d="M0 3h20v14H0z" fill="#c9650f" />
        <path d="M0 3h20v4l-10 4L0 7z" fill="#de7a1b" />
        <path d="M10 7v4" stroke="#f9d49c" strokeWidth="2" />
      </Svg>
    ),
  },
];

interface FieldProps {
  label: string;
  row: string;
  value?: string;
  select?: boolean;
  tone?: string;
  width?: string;
}

const Field: React.FC<FieldProps> = ({ label, row, value = '', select = false, tone = 'bg-white text-black', width = 'w-full' }) => {
  const id = React.useId();
  return (
    <>
      <label htmlFor={id} className={`col-start-1 self-center text-right whitespace-nowrap ${row}`}>
        {label}
      </label>
      <div className={`relative col-start-2 h-[21px] self-center ${row} ${width}`}>
        {select ? (
          <>
            <select id={id} defaultValue={value} className={`h-[21px] w-full appearance-none border border-[#acacb4] pl-[2px] leading-[19px] ${tone}`}>
              <option value={value}>{value}</option>
            </select>
            <span className="pointer-events-none absolute top-0 right-0 flex h-[21px] w-[23px] items-center justify-center border-2 border-[#acacac] bg-[#e1e1e1] pt-[3px]">
              <Svg w={11} h={7} box="0 0 11 7">
                <path d="M1 1l4.500 4.500L10 1" stroke="#666" strokeWidth="1.500" />
              </Svg>
            </span>
          </>
        ) : (
          <input id={id} type="text" defaultValue={value} className={`block h-[21px] w-full border border-[#acacb4] px-[1px] leading-[19px] ${tone}`} />
        )}
      </div>
    </>
  );
};

const amber = 'bg-[#ffdf8f] text-black';

const DetailForm = () => (
  <form className="flex min-h-0 flex-1 overflow-hidden pt-[17px] text-[15px] text-black">
    <div className="grid h-[289px] shrink-0 grid-cols-[155px_158px] grid-rows-11 gap-x-[4px]">
      <Field label="JOB NO" row="row-start-1" value="220018" tone="bg-[#ffdf8f] text-[#ff0000]" />
      <Field label="Name" row="row-start-2" tone={amber} />
      <span className="z-10 col-start-2 row-start-2 self-center pl-[3px]">
        <Mosaic cols={21} colors={olives} band={false} />
      </span>
      <Field label="Work Number" row="row-start-3" value="CYA00018" tone="bg-white text-[#ff1493]" />
      <Field label="Gender" row="row-start-4" value="man" select tone="bg-white text-[#ff7f50]" />
      <Field label="Special marks" row="row-start-6" />
      <Field label="wedlock" row="row-start-7" select />
      <Field label="Blood type" row="row-start-8" />
      <Field label="Father" row="row-start-9" />
      <Field label="Mother" row="row-start-10" />
      <Field label="" row="row-start-11" select />
    </div>
    <div className="grid h-[289px] shrink-0 grid-cols-[104px_146px] grid-rows-11 gap-x-[4px]">
      <Field label="State" row="row-start-1" value="Active" select tone={amber} />
      <Field label="Check in" row="row-start-2" value="2018-09-01" select tone={amber} />
      <Field label="Official date" row="row-start-3" />
      <Field label="Dept NO" row="row-start-4" value="00100107" select tone={amber} />
      <Field label="Dept name" row="row-start-5" value="CYA-M" />
      <Field label="Duty" row="row-start-6" value="Sr. Incharge" select />
      <Field label="Class" row="row-start-7" />
      <Field label="Rank" row="row-start-9" select />
    </div>
    <div className="grid h-[289px] shrink-0 grid-cols-[103px_141px] grid-rows-11 gap-x-[4px]">
      <Field label="Identity card" row="row-start-1" width="w-[225px]" />
      <Field label="Birthday" row="row-start-2" />
      <Field label="Age" row="row-start-4" />
      <Field label="Lz-date" row="row-start-6" />
      <Field label="Lz-cause" row="row-start-7" select />
      <Field label="Lz-mode" row="row-start-8" select />
    </div>
    <div className="ml-[16px] min-w-0 flex-1 overflow-hidden pt-[28px]">
      <div className="pl-[1px] leading-[22px]">Photo</div>
      <div className="mt-[4px] h-[192px] w-[150px] border border-[#acacb4]" />
      <button type="button" className="mt-[6px] h-[28px] w-[125px] border border-[#adadad] bg-[#e1e1e1] font-['Noto_Sans',sans-serif]">
        Setup up
      </button>
    </div>
  </form>
);

const DetailPanel = () => (
  <div className="flex min-h-0 flex-1 flex-col border border-[#c5c9ca] bg-[#ebeff0]">
    <div className="flex h-[38px] items-end border-b-2 border-[#c5c9ca] pl-[2px] text-[15px]">
      <button className="flex h-[33px] w-[100px] items-center gap-[3px] border border-b-0 border-[#c5c9ca] pl-[3px] text-left">
        <PersonIcon />
        Base Info
      </button>
      {detailTabs.map((t) => (
        <button key={t.label} className={`flex h-[28px] items-center gap-[3px] border border-b-0 border-l-0 border-[#c9cdce] bg-[#f6fafb] pl-[3px] text-left whitespace-nowrap ${t.width}`}>
          {t.icon}
          {t.label}
        </button>
      ))}
    </div>
    <div className="flex min-h-0 flex-1 flex-col border-l-2 border-l-[#c5c9ca] bg-[#fbfbfc] pr-[4px] pb-[3px]">
      <DetailForm />
      <div className="mt-[17px] ml-[2px] flex h-[22px] shrink-0 items-center bg-[#f5f9fa]">
        <span className="mr-[4px] h-full w-[12px] bg-[#696969]" />
        <Arrow dir="left" />
        <span className="mr-[73px] ml-[3px] h-full flex-1 border border-[#c9cdce] bg-[#ebeff0]" />
        <span className="pr-[3px]"><Arrow dir="right" /></span>
      </div>
    </div>
  </div>
);

const Bar = () => <span className="h-[16px] w-px shrink-0 bg-[#c5c9ca]" />;

const StatusBar = () => (
  <footer className="flex h-[32px] shrink-0 items-center pl-[6px] whitespace-nowrap">
    <span className="flex w-[171px] shrink-0 items-center gap-[3px]">
      <Svg w={18} h={20} box="0 0 18 20">
        <circle cx="9" cy="7" r="6" fill="#e3ebf1" stroke="#b5c4ce" />
        <path d="M6 13h6v5q-3 2-6 0z" fill="#82b4d6" />
        <path d="M9 8v6" stroke="#fff" strokeWidth="2" />
      </Svg>
      Ver:5.20.23.0508
    </span>
    <span className="flex w-[21px] shrink-0 items-center">
      <Svg w={19} h={20} box="0 0 19 20">
        <path d="M1 1h17v12H1z" fill="#d6d3bd" />
        <path d="M2 2h13v9H2z" fill="#1fb2cb" />
        <path d="M17 1v13H8" stroke="#8b8870" />
        <path d="M1 18.500h17" stroke="#4a7f93" strokeWidth="2" />
        <path d="M9 14v4" stroke="#b5b29a" strokeWidth="2" />
      </Svg>
    </span>
    <Bar />
    <span className="flex w-[193px] shrink-0 items-center gap-[3px] pl-[3px]">
      <Svg w={20} h={20} box="0 0 20 20">
        <ellipse cx="10" cy="6.500" rx="5" ry="6" stroke="#999fa2" strokeWidth="1.500" />
        <path d="M8 12q0 3-3 3-5 1-4 3 9 2 18 0 1-2-4-3-3 0-3-3" stroke="#999fa2" strokeWidth="1.500" />
      </Svg>
      Operator:admin[admin]
    </span>
    <Bar />
    <span className="flex w-[287px] shrink-0 items-center gap-[2px] pl-[4px]">
      <Svg w={19} h={19} box="0 0 19 19">
        <circle cx="9.500" cy="9.500" r="8.500" fill="#e6f1f8" stroke="#8fb5ce" strokeWidth="1.500" />
        <path d="M9.500 4v6h5" stroke="#4d86ad" strokeWidth="1.500" />
      </Svg>
      Service Period:2023-05-24T14:47:11
    </span>
    <Bar />
    <span className="flex w-[145px] shrink-0 items-center gap-[2px] pl-[4px]">
      <Svg w={19} h={19} box="0 0 19 19">
        <circle cx="9.500" cy="9.500" r="9" fill="#67bb10" />
        <circle cx="9.500" cy="9.500" r="4" stroke="#fff" strokeWidth="2.500" />
      </Svg>
      Server:..\sql2014
    </span>
    <span className="flex w-[184px] shrink-0 items-center gap-[3px] pl-[1px]">
      <Svg w={17} h={20} box="0 0 17 20">
        <path d="M2 2h13v16H2z" fill="#a3cbe6" />
        <path d="M5 2h5v16H5z" fill="#dceefa" />
        <path d="M1 2h15M1 7h15M1 13h15M1 18h15" stroke="#6f9fc2" strokeWidth="1.500" />
      </Svg>
      Database:tphrmsa_en
    </span>
    <Bar />
    <span className="flex w-[175px] shrink-0 items-center gap-[2px] pl-[3px]">
      <Svg w={19} h={19} box="0 0 19 19">
        <circle cx="9.500" cy="9.500" r="8.500" fill="#e9f3f9" stroke="#8fb5ce" strokeWidth="1.500" />
        <path d="M9.500 3v7" stroke="#5c8fb4" strokeWidth="1.500" />
      </Svg>
      2023-05-18 10:11:46
    </span>
    <Svg w={18} h={18} box="0 0 18 18">
      <path d="M9 1l2.500 5.500 6 .5-4.500 4 1.500 6L9 14l-5.500 3L5 11 .5 7l6-.5z" fill="#b4cbdb" stroke="#9dbad0" />
    </Svg>
    <a href="#support" className="ml-[3px] underline">service support</a>
  </footer>
);

const App: React.FC = () => {
  return (
    <div className="flex h-screen flex-col overflow-hidden bg-[#ebeff0] font-['Liberation_Sans',Arial,sans-serif] text-[16px] text-[#4e4e4e]">
      <TitleBar />
      <Ribbon />
      <div className="flex min-h-0 flex-1">
        <Sidebar />
        <main className="flex min-w-0 flex-1 flex-col">
          <TabStrip />
          <Toolbar />
          <div className="flex min-h-0 flex-1 gap-[5px] bg-[#fcfdfd] pt-[3px]">
            <Tree />
            <div className="flex min-w-0 flex-1 flex-col gap-[5px]">
              <TablePanel />
              <DetailPanel />
            </div>
          </div>
        </main>
      </div>
      <StatusBar />
    </div>
  );
};

export default App;
